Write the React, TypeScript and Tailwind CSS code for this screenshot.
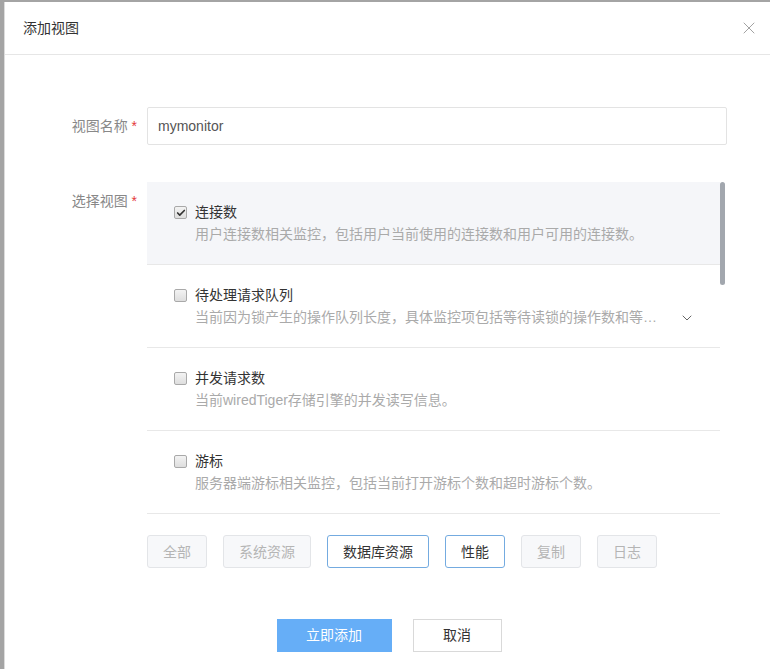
import { Check, ChevronDown, X } from 'lucide-react';

const views = [
    { title: '连接数', desc: '用户连接数相关监控，包括用户当前使用的连接数和用户可用的连接数。', checked: true },
    { title: '待处理请求队列', desc: '当前因为锁产生的操作队列长度，具体监控项包括等待读锁的操作数和等待写锁的操作数。', more: true },
    { title: '并发请求数', desc: '当前wiredTiger存储引擎的并发读写信息。' },
    { title: '游标', desc: '服务器端游标相关监控，包括当前打开游标个数和超时游标个数。' },
    { title: '操作延迟', desc: '数据库读写及命令操作的平均延迟。' },
];

const filters = [
    { name: '全部' },
    { name: '系统资源' },
    { name: '数据库资源', active: true },
    { name: '性能', active: true },
    { name: '复制' },
    { name: '日志' },
];

function Checkbox({ checked }: { checked?: boolean }) {
    return (
        <span className="w-[13px] h-[13px] shrink-0 rounded-[2px] border border-[#a9a9a9] bg-gradient-to-b from-[#f3f3f3] to-[#dedede] flex items-center justify-center">
            {checked && <Check size={10} strokeWidth={4} className="text-[#333]" />}
        </span>
    );
}

export default function App() {
    return (
        <div
            className="min-h-[669px] bg-[#a4a4a4] pt-[2px] pl-[4px] flex"
            style={{ fontFamily: '"Liberation Sans", "Noto Sans CJK SC", sans-serif' }}
        >
            <div className="flex-1 bg-white border-l border-[#dcdcdc] flex flex-col">
                {/* Header */}
                <div className="h-[53px] flex items-center justify-between pl-[18px] pr-[11px] border-b border-[#e6e6e6]">
                    <span className="text-[14px] text-[#333]">添加视图</span>
                    <X size={20} strokeWidth={1.1} className="text-[#999]" />
                </div>

                {/* Form */}
                <div className="flex flex-col pr-[43px] pt-[52px]">
                    <div className="flex items-center">
                        <label className="w-[142px] shrink-0 pr-[10px] text-right text-[14px] text-[#888]">
                            视图名称 <span className="text-[#e4393c]">*</span>
                        </label>
                        <div className="flex-1 h-[38px] border border-[#e3e3e3] rounded-[2px] flex items-center px-[10px] text-[14px] text-[#555]">
                            mymonitor
                        </div>
                    </div>

                    <div className="flex mt-[37px]">
                        <label className="w-[142px] shrink-0 pr-[10px] pt-[9px] text-right text-[14px] text-[#888]">
                            选择视图 <span className="text-[#e4393c]">*</span>
                        </label>
                        <div className="flex-1 flex flex-col">
                            <div className="flex h-[332px] overflow-hidden">
                                <div className="flex-1 flex flex-col">
                                    {views.map((v, i) => (
                                        <div
                                            key={v.title}
                                            className={`shrink-0 h-[83px] border-b border-[#e8e8e8] pl-[27px] pt-[20px] flex ${i === 0 ? 'bg-[#f5f6f9]' : 'bg-white'}`}
                                        >
                                            <div className="pt-[4px] pr-[8px]">
                                                <Checkbox checked={v.checked} />
                                            </div>
                                            <div className="flex-1 flex flex-col">
                                                <div className="h-[21px] leading-[21px] text-[14px] text-[#333]">{v.title}</div>
                                                <div className="flex items-center h-[22px]">
                                                    <div className="w-[464px] truncate leading-[22px] text-[14px] text-[#aaa]">{v.desc}</div>
                                                    {v.more && (
                                                        <ChevronDown size={16} strokeWidth={1.5} className="ml-[20px] mt-[2px] text-[#666]" />
                                                    )}
                                                </div>
                                            </div>
                                        </div>
                                    ))}
                                </div>
                                <div className="w-[7px] shrink-0 flex flex-col">
                                    <div className="w-[5px] h-[103px] rounded-full bg-[#a2a7ae]" />
                                </div>
                            </div>

                            <div className="flex gap-[16px] mt-[21px]">
                                {filters.map((f) => (
                                    <div
                                        key={f.name}
                                        className={`h-[33px] px-[15px] flex items-center rounded-[3px] text-[14px] leading-[20px] border ${f.active ? 'bg-white border-[#74abe0] text-[#333]' : 'bg-[#f7f8fa] border-[#e3e5e8] text-[#b5b5b5]'}`}
                                    >
                                        {f.name}
                                    </div>
                                ))}
                            </div>
                        </div>
                    </div>

                    <div className="flex justify-center gap-[21px] mt-[51px] pl-[46px]">
                        <button className="w-[115px] h-[33px] bg-[#66aef7] text-white text-[14px]">立即添加</button>
                        <button className="w-[89px] h-[33px] bg-white border border-[#d9d9d9] text-[#333] text-[14px]">取消</button>
                    </div>
                </div>
            </div>
        </div>
    );
}
